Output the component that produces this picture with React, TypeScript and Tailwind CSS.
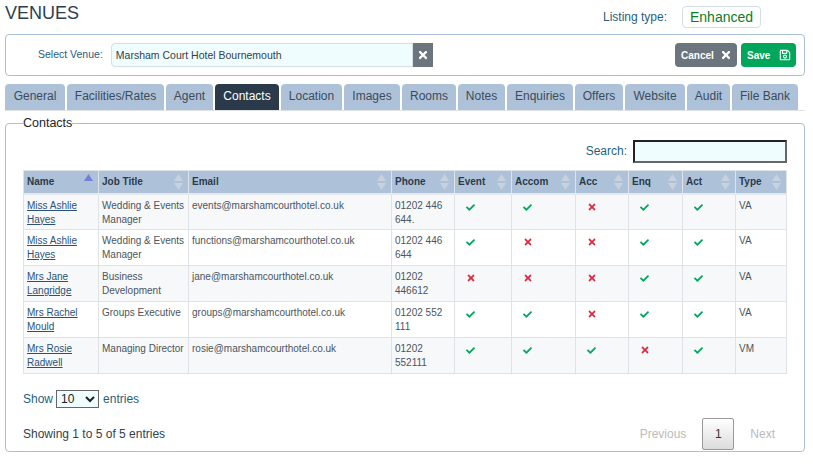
import { FaCheck, FaTimes, FaRegSave } from 'react-icons/fa';

const tabs = [
  { label: 'General', width: 'w-[60px]' },
  { label: 'Facilities/Rates', width: 'w-[97px]' },
  { label: 'Agent', width: 'w-[47px]' },
  { label: 'Contacts', width: 'w-[64px]' },
  { label: 'Location', width: 'w-[61px]' },
  { label: 'Images', width: 'w-[56px]' },
  { label: 'Rooms', width: 'w-[54px]' },
  { label: 'Notes', width: 'w-[47px]' },
  { label: 'Enquiries', width: 'w-[66px]' },
  { label: 'Offers', width: 'w-[48px]' },
  { label: 'Website', width: 'w-[60px]' },
  { label: 'Audit', width: 'w-[43px]' },
  { label: 'File Bank', width: 'w-[66px]' },
];

const columns = [
  { label: 'Name', width: 'w-[75px]' },
  { label: 'Job Title', width: 'w-[90px]' },
  { label: 'Email', width: 'w-[203px]' },
  { label: 'Phone', width: 'w-[63px]' },
  { label: 'Event', width: 'w-[57px]' },
  { label: 'Accom', width: 'w-[64px]' },
  { label: 'Acc', width: 'w-[53px]' },
  { label: 'Enq', width: 'w-[54px]' },
  { label: 'Act', width: 'w-[53px]' },
  { label: 'Type', width: 'w-[51px]' },
];

const rows = [
  { name: ['Miss Ashlie', 'Hayes'], job: 'Wedding & Events Manager', email: 'events@marshamcourthotel.co.uk', phone: '01202 446 644.', flags: [1, 1, 0, 1, 1], type: 'VA' },
  { name: ['Miss Ashlie', 'Hayes'], job: 'Wedding & Events Manager', email: 'functions@marshamcourthotel.co.uk', phone: '01202 446 644', flags: [1, 0, 0, 1, 1], type: 'VA' },
  { name: ['Mrs Jane', 'Langridge'], job: 'Business Development', email: 'jane@marshamcourthotel.co.uk', phone: '01202 446612', flags: [0, 0, 0, 1, 1], type: 'VA' },
  { name: ['Mrs Rachel', 'Mould'], job: 'Groups Executive', email: 'groups@marshamcourthotel.co.uk', phone: '01202 552 111', flags: [1, 1, 0, 1, 1], type: 'VA' },
  { name: ['Mrs Rosie', 'Radwell'], job: 'Managing Director', email: 'rosie@marshamcourthotel.co.uk', phone: '01202 552111', flags: [1, 1, 1, 0, 1], type: 'VM' },
];

function SortIcon({ active }: { active: boolean }) {
  return (
    <svg width="9" height="16" viewBox="0 0 9 16" className="absolute right-[5px] top-[3px]">
      <path d="M4.5 0 L9 7 L0 7 Z" fill={active ? '#727fd6' : '#c9d1dc'} />
      {!active && <path d="M4.5 16 L9 9 L0 9 Z" fill="#c9d1dc" />}
    </svg>
  );
}

function Flag({ on }: { on: number }) {
  return on ? (
    <FaCheck className="text-[9px] text-[#00a65a] ml-[8px] mt-[4px]" />
  ) : (
    <FaTimes className="text-[10px] text-[#e0293f] ml-[8px] mt-[3px]" />
  );
}

export default function App() {
  return (
    <div className="w-[813px] h-[464px] bg-white overflow-hidden pl-[5px] pr-[8px] font-['Liberation_Sans',Arial,sans-serif] text-[#2c3e50]">
      {/* heading */}
      <div className="flex items-start h-[34px]">
        <h1 className="text-[18px] leading-[20px] mt-[3px]">VENUES</h1>
        <span className="ml-auto mt-[10px] text-[12px] leading-[14px] text-[#1f5f80]">Listing type:</span>
        <span className="ml-[15px] mr-[44px] mt-[6px] h-[22px] w-[79px] rounded border border-[#d5dde6] text-center text-[14px] leading-[20px] text-[#0a7d1e]">Enhanced</span>
      </div>

      {/* venue bar */}
      <div className="flex items-center h-[42px] rounded border border-[#a9c0d8] pl-[32px] pr-[8px]">
        <label className="text-[10.5px] text-[#2a5a7c]">Select Venue:</label>
        <div className="ml-[8px] flex h-[24px] w-[322px]">
          <div className="w-[302px] rounded-l border border-[#d5dde6] bg-[#effdfe] pl-[4px] text-[10.5px] leading-[22px] text-[#333f4c]">Marsham Court Hotel Bournemouth</div>
          <div className="flex w-[20px] items-center justify-center bg-[#6c757d] text-white"><FaTimes className="text-[12px]" /></div>
        </div>
        <button className="ml-auto flex h-[24px] w-[62px] items-center justify-between rounded bg-[#6c757d] pl-[6px] pr-[5px] text-[10px] font-bold text-white"><span>Cancel</span><FaTimes className="text-[12px]" /></button>
        <button className="ml-[4px] flex h-[24px] w-[55px] items-center justify-between rounded bg-[#00a65a] pl-[6px] pr-[5px] text-[10px] font-bold text-white"><span>Save</span><FaRegSave className="text-[12px]" /></button>
      </div>

      {/* tabs */}
      <div className="mt-[8px] flex h-[27px] gap-[2px] border-b border-[#dfe3e8]">
        {tabs.map((t) => (
          <div key={t.label} className={t.label === 'Contacts' ? `${t.width} h-[26px] rounded-t bg-[#2b3a4b] text-center text-[12px] leading-[24px] text-white` : `${t.width} h-[26px] rounded-t bg-[#adc2d9] text-center text-[12px] leading-[24px] text-[#3c4b5a]`}>
            {t.label}
          </div>
        ))}
      </div>

      {/* contacts panel */}
      <fieldset className="mt-[5px] h-[336px] rounded border border-[#a9c0d8] px-[17px]">
        <legend className="text-[12.5px] leading-[14px] text-[#20262d]">Contacts</legend>
        <div className="flex items-center justify-end mt-[9px] h-[24px]">
          <span className="text-[12px] text-[#1f5f80]">Search:</span>
          <input className="ml-[6px] h-[23px] w-[154px] border-2 border-t-[#222] border-l-[#222] border-r-[#666] border-b-[#666] bg-[#effdfe]" />
        </div>
        <table className="mt-[7px] table-fixed w-[763px] border-collapse text-[10px] leading-[14px] text-[#4a5560]">
          <thead>
            <tr className="h-[23px] bg-[#adc2d9] border-b-[2px] border-[#e6e8ec]">
              {columns.map((c, i) => (
                <th key={c.label} className={`${c.width} relative border border-[#dfe3e8] px-[3px] text-left font-bold text-[#2b3a4b]`}>
                  {c.label}
                  <SortIcon active={i === 0} />
                </th>
              ))}
            </tr>
          </thead>
          <tbody>
            {rows.map((r, i) => (
              <tr key={i} className={i % 2 === 0 ? 'h-[36px] bg-[#f7f8fa]' : 'h-[36px] bg-white'}>
                <td className="border border-[#dfe3e8] px-[3px] pt-[4px] pb-0 align-top">
                  <a className="text-[#2b5276] underline">{r.name[0]}<br />{r.name[1]}</a>
                </td>
                <td className="border border-[#dfe3e8] px-[3px] pt-[4px] pb-0 align-top">{r.job}</td>
                <td className="border border-[#dfe3e8] px-[3px] pt-[4px] pb-0 align-top">{r.email}</td>
                <td className="border border-[#dfe3e8] px-[3px] pt-[4px] pb-0 align-top">{r.phone}</td>
                {r.flags.map((f, j) => (
                  <td key={j} className="border border-[#dfe3e8] px-[3px] pt-[4px] pb-0 align-top"><Flag on={f} /></td>
                ))}
                <td className="border border-[#dfe3e8] px-[3px] pt-[4px] pb-0 align-top">{r.type}</td>
              </tr>
            ))}
          </tbody>
        </table>
        <div className="mt-[16px] flex items-center text-[12px] text-[#1f5f80]">
          Show
          <select className="ml-[3px] mr-[4px] h-[18px] w-[43px] border border-[#666] bg-[#effdfe] text-[12px] text-[#222]" defaultValue="10">
            <option>10</option>
          </select>
          entries
        </div>
        <div className="mt-[10px] flex items-center h-[32px]">
          <span className="text-[12px] text-[#333f4c]">Showing 1 to 5 of 5 entries</span>
          <div className="ml-auto flex items-center text-[12px] text-[#bbb]">
            <span className="mr-[16px]">Previous</span>
            <span className="h-[32px] w-[32px] rounded-[2px] border border-[#999] bg-gradient-to-b from-white to-[#dcdcdc] text-center leading-[30px] text-[#333]">1</span>
            <span className="ml-[16px] mr-[12px]">Next</span>
          </div>
        </div>
      </fieldset>
    </div>
  );
}
